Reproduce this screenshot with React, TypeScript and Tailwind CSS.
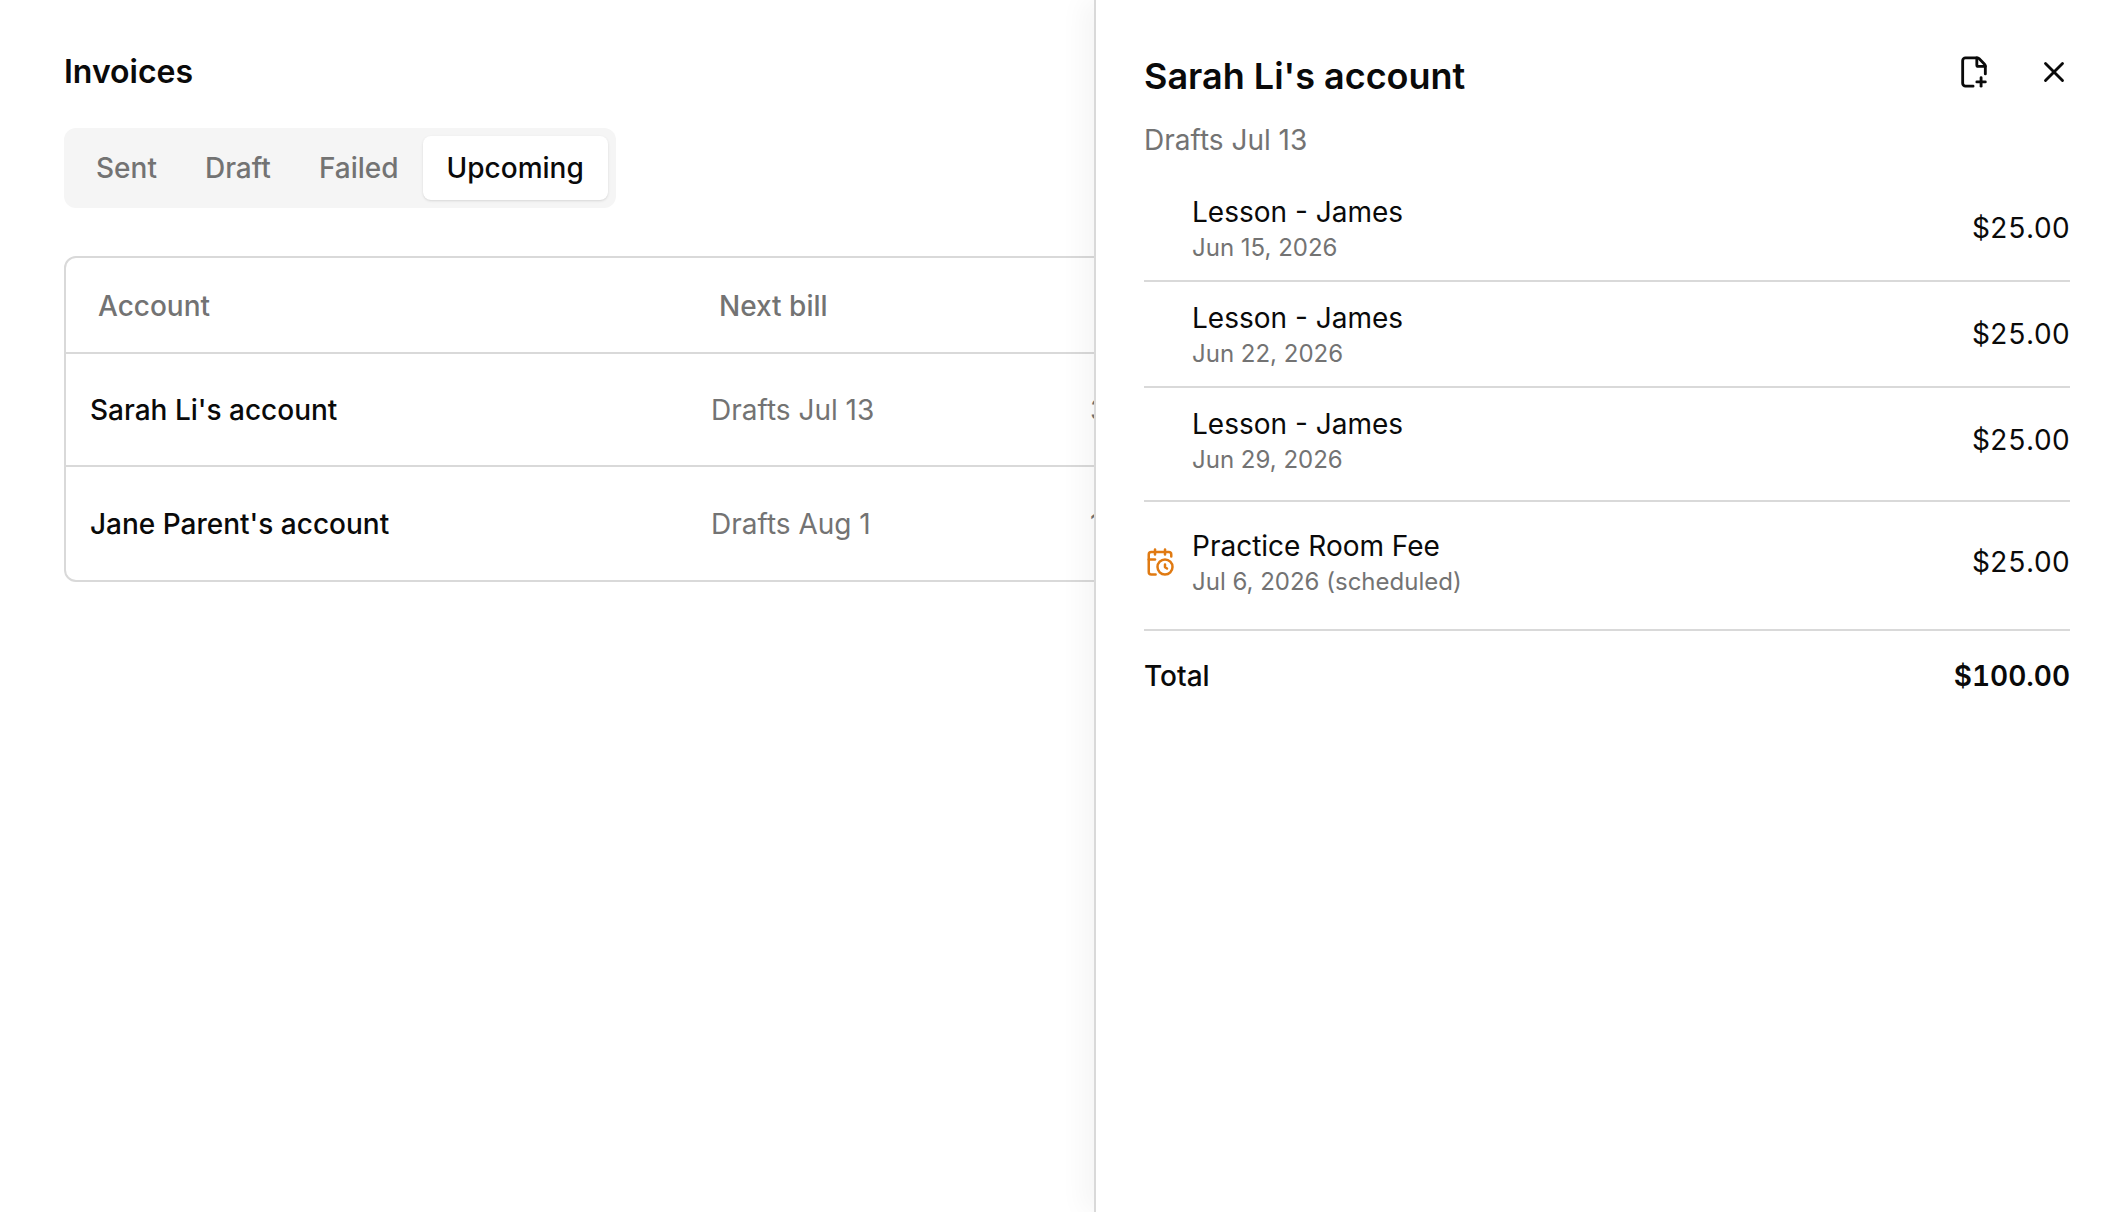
import React from 'react';
import { X } from 'lucide-react';

const TABS = ['Sent', 'Draft', 'Failed'];

const ACCOUNTS = [
    { name: "Sarah Li's account", next: 'Drafts Jul 13', count: '3' },
    { name: "Jane Parent's account", next: 'Drafts Aug 1', count: '1' },
];

const LINES = [
    { title: 'Lesson - James', date: 'Jun 15, 2026', height: 'h-[106px]' },
    { title: 'Lesson - James', date: 'Jun 22, 2026', height: 'h-[106px]' },
    { title: 'Lesson - James', date: 'Jun 29, 2026', height: 'h-[114px] pb-2' },
    { title: 'Practice Room Fee', date: 'Jul 6, 2026 (scheduled)', height: 'h-[129px] pb-2', scheduled: true },
];

function FilePlusIcon() {
    return (
        <svg width="34" height="34" viewBox="0 0 24 24" fill="none" stroke="#0a0a0a" strokeWidth="2" strokeLinecap="round" strokeLinejoin="round">
            <path d="M11.35 22H6a2 2 0 0 1-2-2V4a2 2 0 0 1 2-2h8a2.4 2.4 0 0 1 1.706.706l3.588 3.588A2.4 2.4 0 0 1 20 8v5.35" />
            <path d="M14 2v5a1 1 0 0 0 1 1h5" />
            <path d="M14 19h6" />
            <path d="M17 16v6" />
        </svg>
    );
}

function CalendarClockIcon() {
    return (
        <svg width="30" height="30" viewBox="0 0 24 24" fill="none" stroke="#e07a12" strokeWidth="2" strokeLinecap="round" strokeLinejoin="round">
            <path d="M16 14v2.2l1.6 1" />
            <path d="M16 2v4" />
            <path d="M21 7.5V6a2 2 0 0 0-2-2H5a2 2 0 0 0-2 2v14a2 2 0 0 0 2 2h3.5" />
            <path d="M3 10h5" />
            <path d="M8 2v4" />
            <circle cx="16" cy="16" r="6" />
        </svg>
    );
}

export default function App() {
    return (
        <div className="relative h-[1212px] w-[2106px] overflow-hidden bg-white font-['Inter',sans-serif] text-[#0a0a0a]">
            <main className="px-16 pt-[52px]">
                <h1 className="text-[32px] font-semibold leading-10">Invoices</h1>

                <div className="mt-[36px] flex h-[80px] w-fit items-center rounded-xl bg-[#f5f5f5] px-2">
                    {TABS.map(tab => (
                        <span key={tab} className="px-6 text-[28px] font-medium text-[#737373]">
                            {tab}
                        </span>
                    ))}
                    <span className="flex h-16 items-center rounded-lg bg-white px-6 text-[28px] font-medium shadow-sm">
                        Upcoming
                    </span>
                </div>

                <div className="mt-[48px] w-[1400px] rounded-xl border-2 border-[#d9d9d9]">
                    <div className="flex h-[96px] items-center border-b-2 border-[#d9d9d9] pt-[2px] text-[28px] font-medium text-[#737373]">
                        <span className="w-[621px] pl-8">Account</span>
                        <span className="pl-8">Next bill</span>
                    </div>
                    {ACCOUNTS.map((account, i) => (
                        <div
                            key={account.name}
                            className={`flex h-[113px] items-center text-[28px] ${i === 0 ? 'border-b-2 border-[#d9d9d9]' : ''}`}
                        >
                            <span className="w-[621px] pl-6 font-medium">{account.name}</span>
                            <span className="w-[403px] pl-6 text-[#737373]">{account.next}</span>
                            <span className="text-[#737373]">{account.count}</span>
                        </div>
                    ))}
                </div>
            </main>

            <aside className="absolute inset-y-0 left-[1094px] right-0 border-l-2 border-[#d9d9d9] bg-white pl-12 pr-9 shadow-[-12px_0_24px_rgba(0,0,0,0.04)]">
                <div className="flex items-start justify-between pt-[52px]">
                    <div>
                        <h2 className="text-[36px] font-semibold leading-[48px]">Sarah Li's account</h2>
                        <p className="mt-[20px] text-[28px] leading-10 text-[#737373]">Drafts Jul 13</p>
                    </div>
                    <div className="-mr-px mt-[3px] flex items-center gap-[46px]">
                        <FilePlusIcon />
                        <X size={34} color="#0a0a0a" strokeWidth={2} />
                    </div>
                </div>

                <div className="mt-4">
                    {LINES.map(line => (
                        <div key={line.date} className={`flex items-center border-b-2 border-[#d9d9d9] ${line.height}`}>
                            <div className="flex w-12 shrink-0 items-center pl-px">
                                {line.scheduled && <CalendarClockIcon />}
                            </div>
                            <div className={`flex-1 ${line.scheduled ? 'pt-px' : ''}`}>
                                <div className="text-[28px] leading-[39px]">{line.title}</div>
                                <div className="text-[24px] leading-[32px] text-[#737373]">{line.date}</div>
                            </div>
                            <span className="text-[28px] tabular-nums">$25.00</span>
                        </div>
                    ))}
                </div>

                <div className="flex h-[90px] items-center justify-between text-[28px]">
                    <span className="font-medium">Total</span>
                    <span className="font-semibold tabular-nums">$100.00</span>
                </div>
            </aside>
        </div>
    );
}
